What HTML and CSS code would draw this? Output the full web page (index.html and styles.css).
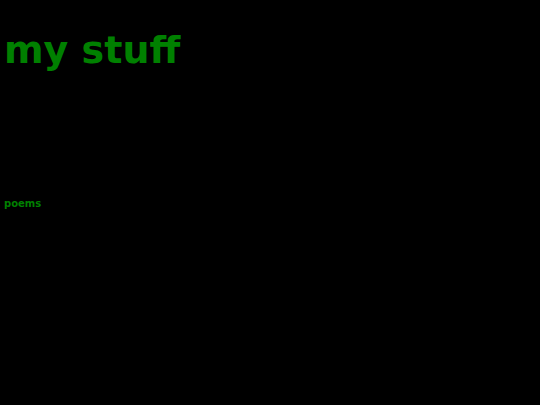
FILE: index.html
```html
<!DOCTYPE html>
<html>
<head>
<meta charset="utf-8">
<link rel="stylesheet" href="styles.css">
</head>
<body>
<h1 class="title">my stuff</h1>
<nav class="links"><a class="link" href="#">poems</a></nav>
</body>
</html>
```
FILE: styles.css
```css
html, body { background: #000; }
body { margin: 0; padding: 0 4px; font-family: "DejaVu Sans", sans-serif; color: #008000; }
.title { margin: 0; padding-top: 26px; font-size: 38px; font-weight: bold; line-height: 48px; }
.links { margin-top: 122px; line-height: 12px; }
.link { color: #008000; text-decoration: none; font-weight: bold; font-size: 10px; }
```
